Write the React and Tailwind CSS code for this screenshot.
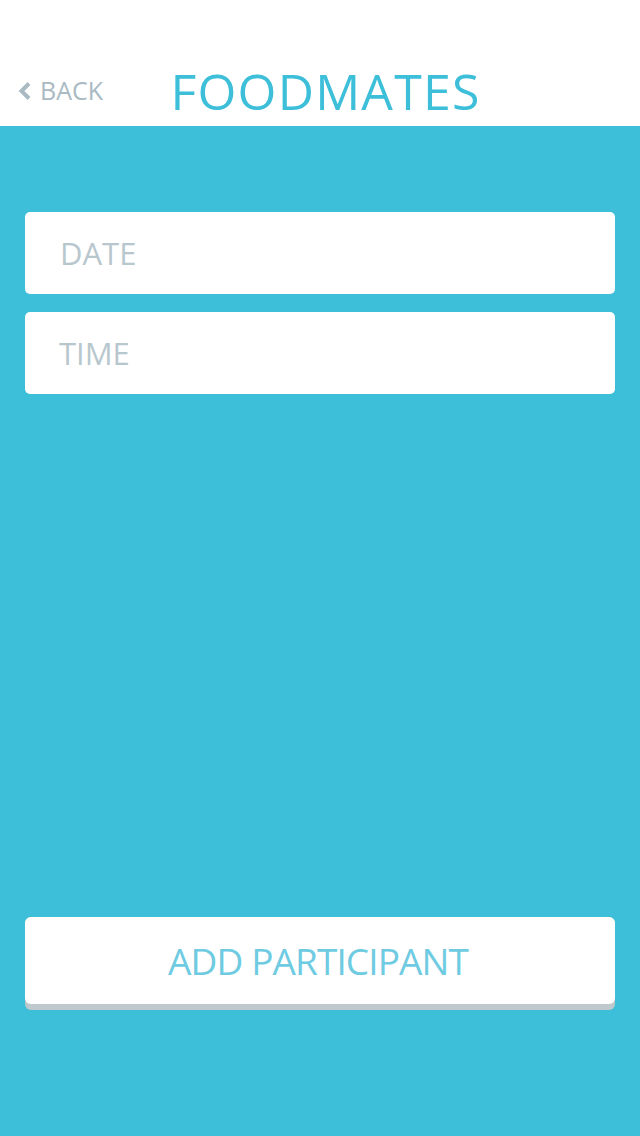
import React from "react";

export default function App() {
  return (
    <div className="w-[640px] h-[1136px] bg-[#3dbed9] flex flex-col" style={{ fontFamily: "'Open Sans', sans-serif" }}>
      <div className="h-[126px] bg-white relative flex items-end justify-center pb-[10px]">
        <div className="absolute left-[17px] top-[78px] flex items-center gap-[8px] text-[#a9bac3]">
          <svg width="15" height="22" viewBox="0 0 15 22">
            <path d="M12 3.5 L4.5 11 L12 18.5" fill="none" stroke="#a9bac3" strokeWidth="4" />
          </svg>
          <span className="text-[25px] leading-none">BACK</span>
        </div>
        <h1 className="text-[50px] leading-none tracking-[1.2px] text-[#3dbed9] pl-[11px]">FOODMATES</h1>
      </div>
      <div className="flex flex-col px-[25px] pt-[86px] flex-1">
        <div className="flex flex-col gap-[18px]">
          <div className="h-[82px] bg-white rounded-[5px] flex items-center pl-[35px] text-[31px] text-[#b8c7ce]">DATE</div>
          <div className="h-[82px] bg-white rounded-[5px] flex items-center pl-[34px] text-[31px] text-[#b8c7ce]">TIME</div>
        </div>
        <div className="mt-[523px] h-[93px] bg-[#bfc8cc] rounded-[6px]">
          <div className="h-[87px] bg-white rounded-[6px] flex items-center justify-center pr-[4px] text-[37px] tracking-[-0.9px] text-[#6fcbe1]">
            ADD PARTICIPANT
          </div>
        </div>
      </div>
    </div>
  );
}
